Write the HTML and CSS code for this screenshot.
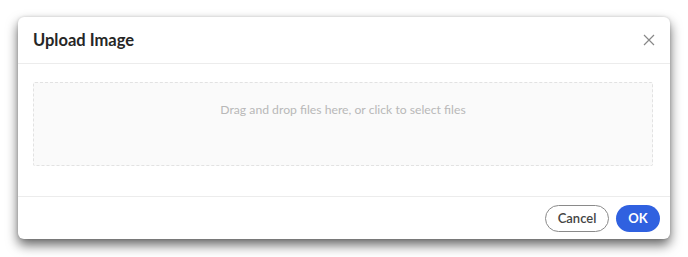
FILE: index.html
```html
<!DOCTYPE html>
<html>
<head>
<meta charset="utf-8">
<link rel="stylesheet" href="styles.css">
</head>
<body>
<div class="dialog">
  <div class="header">
    <div class="title">Upload Image</div>
    <button class="close" aria-label="Close">
      <svg width="12" height="12" viewBox="0 0 12 12"><path d="M1 1L11 11M11 1L1 11" stroke="#888" stroke-width="1.2" fill="none"/></svg>
    </button>
  </div>
  <div class="body">
    <div class="dropzone">Drag and drop files here, or click to select files</div>
  </div>
  <div class="footer">
    <button class="btn cancel">Cancel</button>
    <button class="btn ok">OK</button>
  </div>
</div>
</body>
</html>
```
FILE: styles.css
```css
html, body { margin: 0; padding: 0; background: #fff; }
html { height: 100%; }
body {
  font-family: "Lato", "Open Sans", sans-serif;
  padding: 17px 18px 18px 18px;
  min-height: 100%;
  box-sizing: border-box;
}
.dialog {
  width: 652px;
  height: 222px;
  background: #fff;
  border-radius: 6px;
  box-shadow: 0 6px 12px rgba(0,0,0,0.6), 0 0 3px rgba(0,0,0,0.15);
  display: flex;
  flex-direction: column;
  box-sizing: border-box;
}
.header {
  height: 46px;
  display: flex;
  align-items: center;
  justify-content: space-between;
  padding: 0 14px 0 15px;
  border-bottom: 1px solid #ececec;
  flex: none;
}
.title {
  font-size: 16.5px;
  font-weight: 700;
  color: #262626;
}
.close {
  border: 0;
  background: none;
  padding: 0;
  width: 14px;
  height: 14px;
  display: flex;
  align-items: center;
  justify-content: center;
}
.body {
  flex: 1;
  padding: 18px 17px 0 15px;
}
.dropzone {
  height: 84px;
  box-sizing: border-box;
  border: 1.5px dashed #e2e2e2;
  background: #fafafa;
  border-radius: 2px;
  color: #b8b8b8;
  font-size: 12.2px;
  text-align: center;
  padding-top: 19px;
}
.footer {
  height: 43px;
  border-top: 1px solid #ececec;
  display: flex;
  justify-content: flex-end;
  align-items: center;
  gap: 7px;
  padding: 0 10px;
  flex: none;
  box-sizing: border-box;
}
.btn {
  height: 27px;
  border-radius: 14px;
  font-family: "Lato", sans-serif;
  font-size: 13px;
  font-weight: 600;
  cursor: pointer;
}
.cancel {
  width: 64px;
  background: #fff;
  border: 1px solid #8a8a8a;
  color: #444;
}
.ok {
  width: 44px;
  background: #3061e0;
  border: 0;
  color: #fff;
  font-weight: 700;
}
```
